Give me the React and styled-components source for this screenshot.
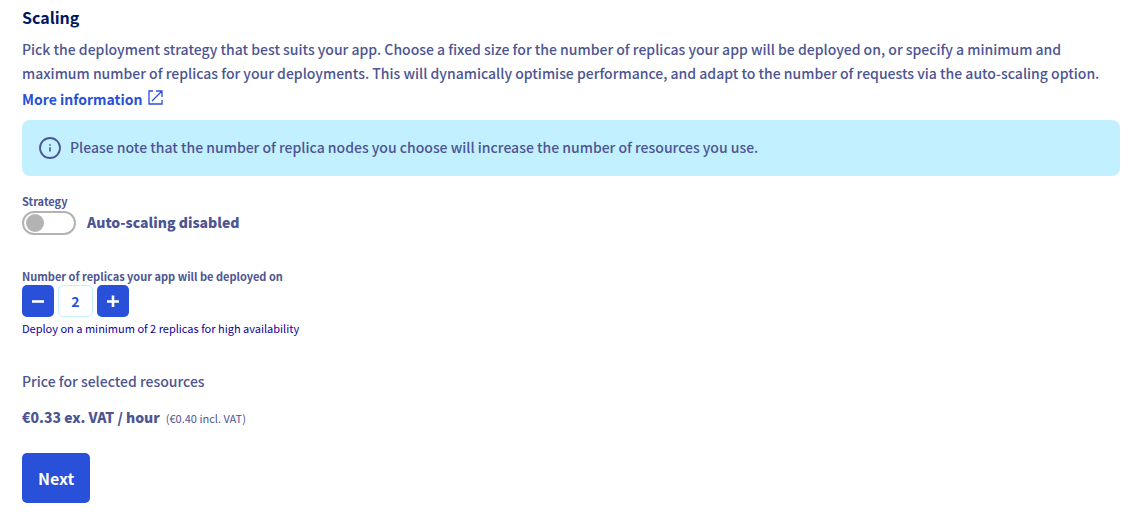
import React, { useState } from "react";
import styled, { createGlobalStyle } from "styled-components";

const color = {
  primary: "#2850d8",
  heading: "#00185e",
  text: "#4d5592",
  info: "#c2f0ff",
  helper: "#10009a",
  muted: "#b3b3b3",
};

const GlobalStyle = createGlobalStyle`
  *, *::before, *::after { box-sizing: border-box; }
  body {
    margin: 0;
    background: #fff;
    color: ${color.text};
    font-family: "Noto Sans CJK SC", "Noto Sans", sans-serif;
    font-size: 14px;
    font-weight: 500;
    line-height: 24px;
  }
  button, input { font: inherit; }
`;

const Page = styled.main`
  padding: 5px 17px 16px 22px;
`;

const Title = styled.h2`
  margin: 0 0 8px;
  color: ${color.heading};
  font-size: 16px;
  font-weight: 700;
  line-height: 24px;
`;

const Description = styled.p`
  margin: 0;
`;

const MoreLink = styled.a`
  display: inline-flex;
  align-items: center;
  gap: 6px;
  height: 24px;
  margin-top: 2px;
  color: ${color.primary};
  font-weight: 700;
  text-decoration: none;

  svg {
    margin-bottom: 4px;
  }
`;

const Notice = styled.div`
  display: flex;
  align-items: flex-start;
  gap: 8px;
  margin-top: 9px;
  padding: 16px;
  border-radius: 8px;
  background: ${color.info};
  line-height: 22px;

  svg {
    flex: none;
  }
`;

const Field = styled.div`
  margin-top: ${({ $gap }) => $gap}px;
`;

const FieldLabel = styled.label`
  display: block;
  font-size: 11px;
  font-weight: 700;
  line-height: 16px;
`;

const SwitchRow = styled.div`
  display: flex;
  align-items: flex-start;
  gap: 11px;
  margin-top: 2px;
`;

const Switch = styled.input`
  appearance: none;
  display: flex;
  align-items: center;
  flex: none;
  width: 54px;
  height: 24px;
  margin: 0;
  padding: 0 2px;
  border: 2px solid ${color.muted};
  border-radius: 12px;
  cursor: pointer;

  &::before {
    content: "";
    width: 18px;
    height: 18px;
    border-radius: 50%;
    background: ${color.muted};
  }

  &:checked {
    justify-content: flex-end;
    border-color: ${color.primary};
  }

  &:checked::before {
    background: ${color.primary};
  }
`;

const SwitchLabel = styled.label`
  font-weight: 900;
  line-height: 22px;
`;

const Stepper = styled.div`
  display: flex;
  gap: 4px;
  margin-top: 1px;
`;

const StepButton = styled.button`
  display: flex;
  align-items: center;
  justify-content: center;
  width: 32px;
  height: 32px;
  padding: 0;
  border: 0;
  border-radius: 5px;
  background: ${color.primary};
  color: #fff;
  cursor: pointer;
`;

const StepValue = styled.input`
  width: 35px;
  height: 32px;
  padding: 0;
  border: 1px solid ${color.info};
  border-radius: 5px;
  background: #fff;
  color: ${color.primary};
  font-weight: 700;
  text-align: center;
`;

const Helper = styled.p`
  margin: 3px 0 0;
  color: ${color.helper};
  font-size: 11px;
  font-weight: 400;
  line-height: 16px;
`;

const PriceLabel = styled.p`
  margin: 33px 0 12px;
`;

const Price = styled.p`
  display: flex;
  align-items: baseline;
  gap: 6px;
  margin: 0;
`;

const PriceAmount = styled.strong`
  font-weight: 900;
`;

const PriceVat = styled.span`
  font-size: 11px;
  font-weight: 400;
`;

const NextButton = styled.button`
  display: block;
  height: 50px;
  margin-top: 23px;
  padding: 0 16px;
  border: 0;
  border-radius: 5px;
  background: ${color.primary};
  color: #fff;
  font-size: 16px;
  font-weight: 700;
  cursor: pointer;
`;

const ExternalIcon = () => (
  <svg width="15" height="15" viewBox="0 0 15 15" fill="none" stroke="currentColor" strokeWidth="1.3" aria-hidden="true">
    <path d="M5 1H1v13h13v-4M8 1h6v6M14 1L4 11" />
  </svg>
);

const InfoIcon = () => (
  <svg width="24" height="24" viewBox="0 0 24 24" fill="none" aria-hidden="true">
    <circle cx="12" cy="12" r="10" stroke="currentColor" strokeWidth="1.8" />
    <path d="M12 11.2v4.4M12 8.2v1.6" stroke="currentColor" strokeWidth="1.6" />
  </svg>
);

const SignIcon = ({ plus }) => (
  <svg width="12" height="12" viewBox="0 0 12 12" stroke="currentColor" strokeWidth="2.6" aria-hidden="true">
    <path d={plus ? "M0 6.5h12M6 .5v12" : "M0 6.5h12"} />
  </svg>
);

export default function App() {
  const [auto, setAuto] = useState(false);
  const [replicas, setReplicas] = useState(2);

  return (
    <>
      <GlobalStyle />
      <Page>
        <Title>Scaling</Title>
        <Description>
          Pick the deployment strategy that best suits your app. Choose a fixed size for the number of
          replicas your app will be deployed on, or specify a minimum and maximum number of replicas for
          your deployments. This will dynamically optimise performance, and adapt to the number of
          requests via the auto-scaling option.
        </Description>
        <MoreLink href="#scaling">
          More information
          <ExternalIcon />
        </MoreLink>
        <Notice>
          <InfoIcon />
          <span>
            Please note that the number of replica nodes you choose will increase the number of resources
            you use.
          </span>
        </Notice>

        <Field $gap={17}>
          <FieldLabel htmlFor="strategy">Strategy</FieldLabel>
          <SwitchRow>
            <Switch
              id="strategy"
              type="checkbox"
              role="switch"
              checked={auto}
              onChange={(e) => setAuto(e.target.checked)}
            />
            <SwitchLabel htmlFor="strategy">Auto-scaling {auto ? "enabled" : "disabled"}</SwitchLabel>
          </SwitchRow>
        </Field>

        <Field $gap={33}>
          <FieldLabel htmlFor="replicas">Number of replicas your app will be deployed on</FieldLabel>
          <Stepper>
            <StepButton type="button" aria-label="Remove a replica" onClick={() => setReplicas(Math.max(1, replicas - 1))}>
              <SignIcon />
            </StepButton>
            <StepValue
              id="replicas"
              inputMode="numeric"
              value={replicas}
              onChange={(e) => setReplicas(Number(e.target.value) || 1)}
            />
            <StepButton type="button" aria-label="Add a replica" onClick={() => setReplicas(replicas + 1)}>
              <SignIcon plus />
            </StepButton>
          </Stepper>
          <Helper>Deploy on a minimum of 2 replicas for high availability</Helper>
        </Field>

        <PriceLabel>Price for selected resources</PriceLabel>
        <Price>
          <PriceAmount>€0.33 ex. VAT / hour</PriceAmount>
          <PriceVat>(€0.40 incl. VAT)</PriceVat>
        </Price>
        <NextButton type="button">Next</NextButton>
      </Page>
    </>
  );
}
